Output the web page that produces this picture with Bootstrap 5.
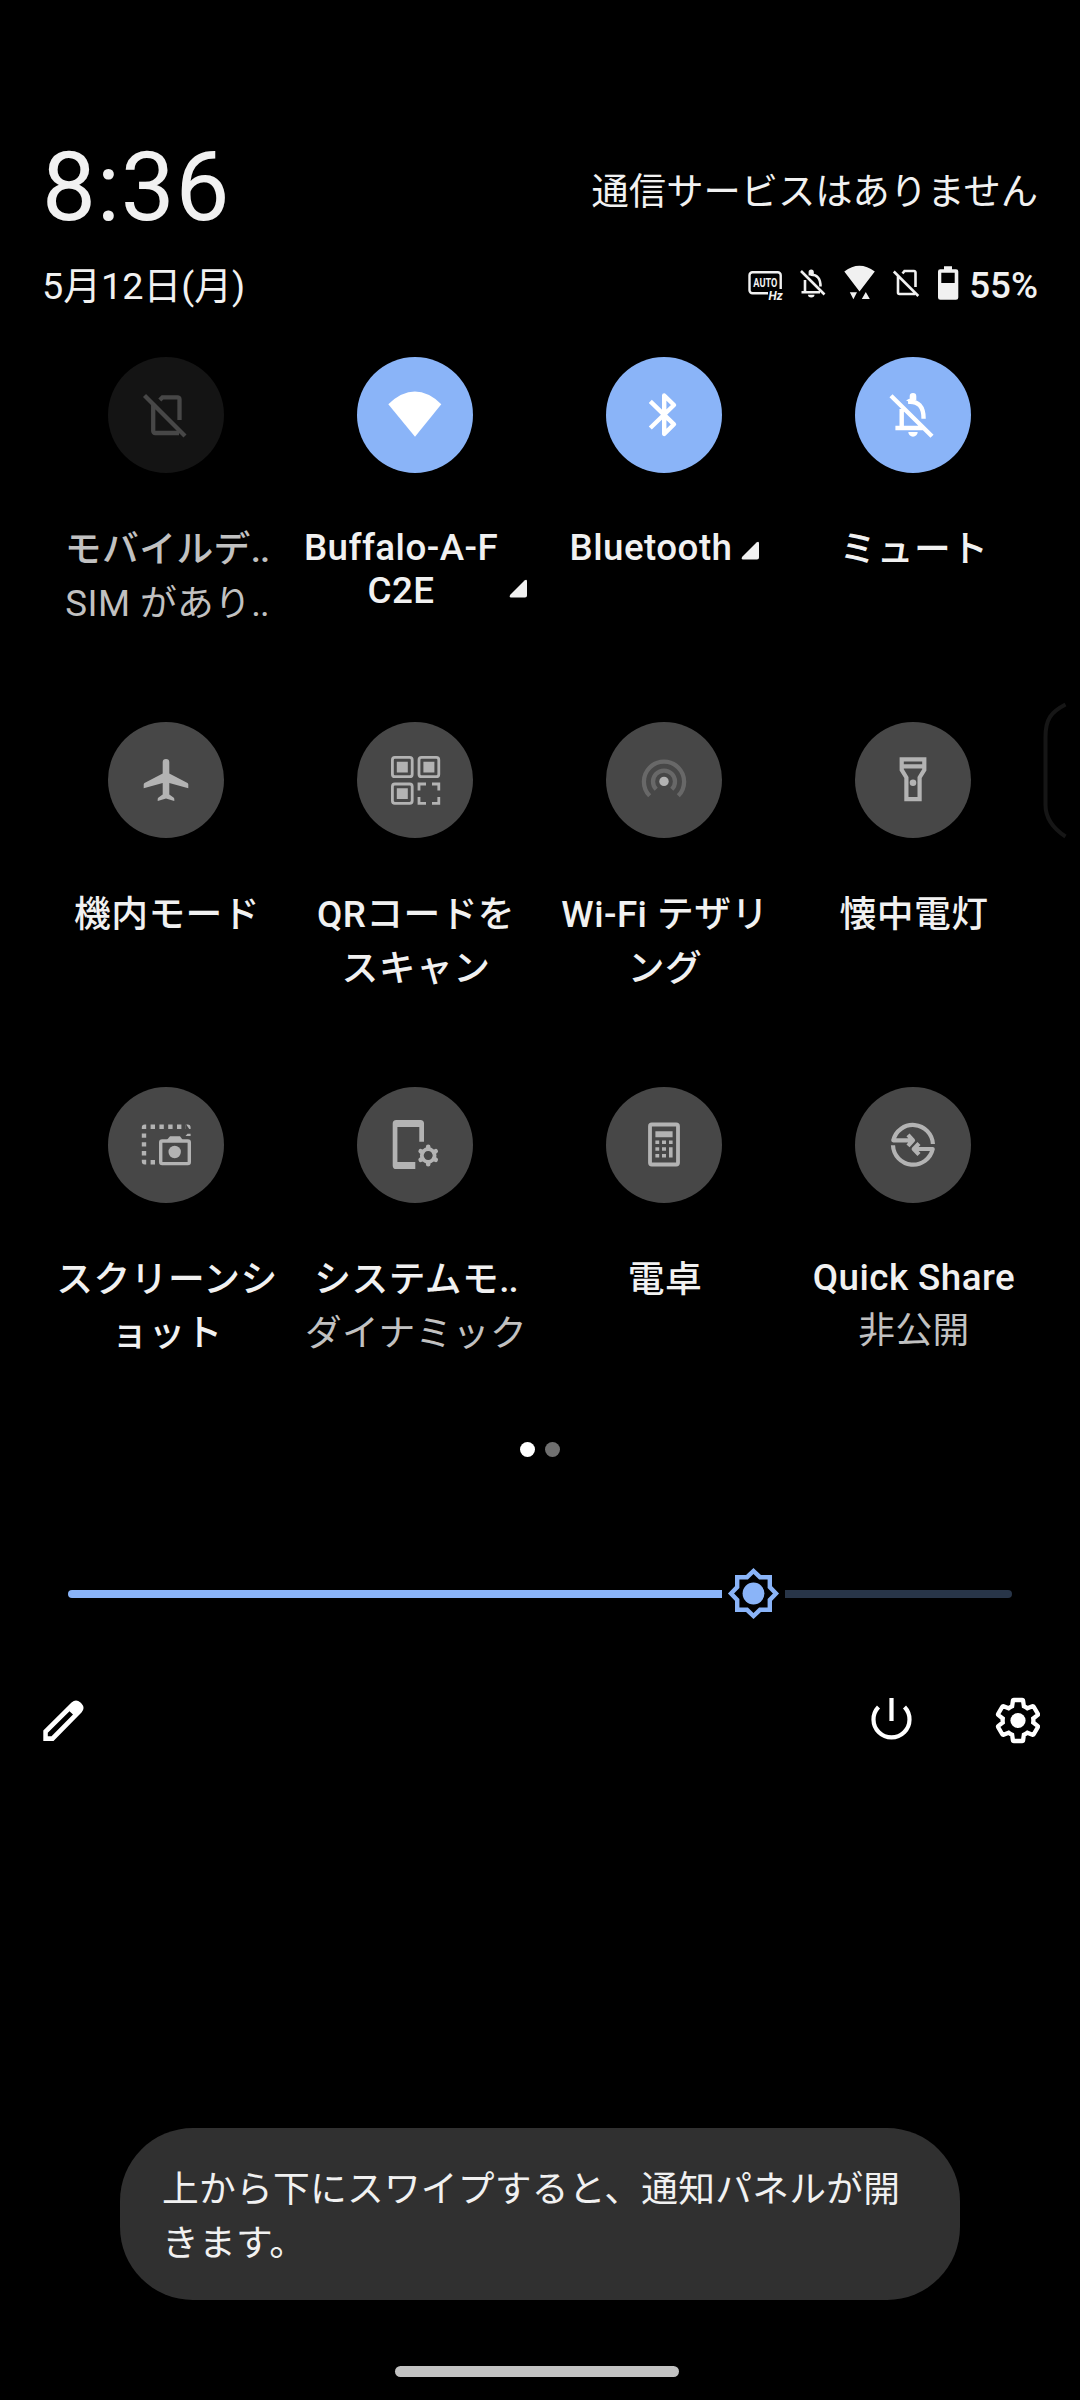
<!DOCTYPE html>
<html lang="ja">
<head>
<meta charset="utf-8">
<meta name="viewport" content="width=device-width, initial-scale=1">
<title>クイック設定</title>
<link rel="stylesheet" href="https://cdn.jsdelivr.net/npm/bootstrap@5.3.0/dist/css/bootstrap.min.css">
<style>
body{background:#000;color:#f1f1f1;font-family:Roboto,"Noto Sans CJK JP",sans-serif;font-size:36.75px;line-height:54px;overflow-x:hidden}
.screen{width:1080px;height:2400px;padding:130px 42px 23px;overflow:hidden}
svg{display:block;flex:none}
.clock-row{height:129px}
.clock{font-size:96px;line-height:114px;letter-spacing:.8px}
.carrier{margin-top:35px;font-size:37.300px}
.date{font-size:37.800px}
.status-icons{height:54px}
.battery-text{font-weight:500;margin-left:9px}
.tiles{width:996px;margin:44px 0 0 -1px;row-gap:44px}
.tile{width:249px;height:321px}
.disc{width:116px;height:116px;border-radius:50%;background:#474747;color:#b3b3b3}
.disc.on{background:#8ab4f8;color:#fff}
.disc.off{background:#141414;color:#474747}
.label-ja,.label-en{font-weight:500;text-align:center;white-space:nowrap;letter-spacing:.45px;padding-left:3px}
.label-ja{margin-top:50px}
.label-en{margin-top:53px;line-height:43px}
.sub{color:#c1c1c1;white-space:nowrap;letter-spacing:.4px;padding-left:3px}
.clip-dots{letter-spacing:-1px}
.label-en + .sub{margin-top:5px}
.unavailable .label-ja{color:#c1c1c1}
.dots{gap:10px;margin-top:34px}
.dot{width:15px;height:15px;border-radius:50%;background:#707070}
.dot.now{background:#fff}
.slider{margin:110px 26px 0;height:53px}
.track-on{height:8px;width:654px;background:#8ab4f8;border-radius:4px 0 0 4px}
.track-off{height:8px;width:227px;background:#283548;border-radius:0 4px 4px 0}
.actions{margin:76px -2px 0 0;height:48px}
.hint{width:840px;height:172px;border-radius:73px;background:#303030;padding:35px 40px 0 42px;letter-spacing:.23px;white-space:nowrap}
.home-bar{width:284px;height:11px;border-radius:6px;background:#c2c2c2;margin:66px 6px 0 0}
.edge{position:absolute;left:1040px;top:700px}
</style>
<script src="https://cdn.jsdelivr.net/npm/bootstrap@5.3.0/dist/js/bootstrap.bundle.min.js"></script>
</head>
<body>
<main class="screen d-flex flex-column position-relative">
  <header>
    <div class="clock-row d-flex justify-content-between align-items-start">
      <div class="clock">8:36</div>
      <div class="carrier">通信サービスはありません</div>
    </div>
    <div class="d-flex justify-content-between">
      <div class="date">5月12日(月)</div>
      <div class="status-icons d-flex">
        <svg width="290" height="54" viewBox="670 259 290 54" fill="none" stroke="#f1f1f1" stroke-width="2.4">
          <path d="M768 293.2H752.5a3 3 0 0 1-3-3V275.300a3 3 0 0 1 3-3h25.200a3 3 0 0 1 3 3V289"/>
          <text x="753.3" y="286.500" font-size="12.500" font-weight="700" textLength="24" lengthAdjust="spacingAndGlyphs" fill="#f1f1f1" stroke="none">AUTO</text>
          <text x="768.500" y="299.500" font-size="12" font-weight="700" font-style="italic" fill="#f1f1f1" stroke="none">Hz</text>
          <path stroke-width="2.600" d="M801 271l23.500 23.500M801.500 292.300h18.500M805 292V280M810.500 274.800q10-.500 10 11.700"/>
          <path fill="#f1f1f1" stroke="none" d="M808.600 275.500v-3.500a2.600 2.600 0 0 1 5.200 0v3.200zM808 294.800h6.500a3.200 2.600 0 0 1-6.500 0z"/>
          <path fill="#f1f1f1" stroke="none" d="M844.300 271.500q15-11.500 30.500 0L859.500 291.500zM849.800 292.300h7.200l-3.600 7zM861.800 299h8l-4-7z"/>
          <path stroke-width="2.600" d="M893.800 271.500l24.500 24.500M898 276v16.500a1.500 1.500 0 0 0 1.500 1.500H915M902.500 273.500l2-2.500H914a1.500 1.500 0 0 1 1.500 1.500V287"/>
          <path fill="#f1f1f1" fill-rule="evenodd" stroke="none" d="M944 266.300h8v3h4a2.300 2.300 0 0 1 2.300 2.300V297.500a2.300 2.300 0 0 1-2.300 2.300H940.300a2.300 2.300 0 0 1-2.300-2.300V271.600a2.300 2.300 0 0 1 2.300-2.300H944zM941.300 272.800V283H954.700V272.800z"/>
        </svg>
        <span class="battery-text">55%</span>
      </div>
    </div>
  </header>

  <section class="tiles d-flex flex-wrap">
    <div class="tile unavailable d-flex flex-column align-items-center">
      <div class="disc off">
        <svg width="116" height="116" fill="none" stroke="currentColor" stroke-width="4.300"><path d="M36.500 38.500L77 79M45.200 46V74a2 2 0 0 0 2 2H71M51.800 43l2.700-2.700H69.500a2 2 0 0 1 2 2V63"/></svg>
      </div>
      <div class="label-ja">モバイルデ<span class="clip-dots">..</span></div>
      <div class="sub">SIM があり<span class="clip-dots">..</span></div>
    </div>
    <div class="tile d-flex flex-column align-items-center">
      <div class="disc on">
        <svg width="116" height="116" fill="currentColor"><path d="M31.300 47.200Q58 22 84.300 47.200L58 79.700z"/></svg>
      </div>
      <div class="d-flex align-items-end">
        <div class="label-en">Buffalo-A-F<br>C2E</div>
        <svg class="ms-2" width="22" height="43" fill="#f1f1f1"><path d="M18.500 11.500q2.500-2 2.500.800V26.500a2 2 0 0 1-2 2H5q-2.500-.500-.500-3z"/></svg>
      </div>
    </div>
    <div class="tile d-flex flex-column align-items-center">
      <div class="disc on">
        <svg width="116" height="116" fill="none" stroke="currentColor" stroke-width="4.400"><path stroke-linejoin="round" d="M44.300 44.300L68 67.300L58.200 77V38.500L68 48L44.300 71"/></svg>
      </div>
      <div class="d-flex align-items-end">
        <div class="label-en">Bluetooth</div>
        <svg class="ms-2" width="20" height="43" fill="#f1f1f1"><path d="M16.500 16.500q2.500-2 2.500.800V31.500a2 2 0 0 1-2 2H3q-2.500-.500-.500-3z"/></svg>
      </div>
    </div>
    <div class="tile d-flex flex-column align-items-center">
      <div class="disc on">
        <svg width="116" height="116" fill="none" stroke="currentColor" stroke-width="4.400"><path d="M36 38.800L77 79.300M40.400 71H69M46.700 71V52M53 44.800q15.600-1.500 15.600 17"/><path fill="currentColor" stroke="none" d="M54.700 44.500V39.300a3.300 3.300 0 0 1 6.600 0V43zM53.300 75h9.400a4.700 4.700 0 0 1-9.400 0zM51 43.500l4-2 3 4.500z"/></svg>
      </div>
      <div class="label-ja">ミュート</div>
    </div>

    <div class="tile d-flex flex-column align-items-center">
      <div class="disc">
        <svg width="116" height="116" fill="currentColor"><path d="M54.700 40.300a3.300 3.300 0 0 1 6.600 0V51.500L79.500 61q.8.500.8 1.500V66.300L61.300 61V72.500L65.500 75.500q.8.600.8 1.500V79L58 76.500L49.700 79V77q0-.9.800-1.500L54.700 72.500V61L35.700 66.300V62.500q0-1 .8-1.500L54.700 51.500z"/></svg>
      </div>
      <div class="label-ja">機内モード</div>
    </div>
    <div class="tile d-flex flex-column align-items-center">
      <div class="disc">
        <svg width="116" height="116" fill="none" stroke="currentColor" stroke-width="2.800"><rect x="35.400" y="35.400" width="19.800" height="19.300" rx="2.500"/><rect x="62" y="35.400" width="19.800" height="19.300" rx="2.500"/><rect x="35.400" y="62" width="19.800" height="19.300" rx="2.500"/><path d="M62 68.500V62H69M75 62h6.800v6.500M81.800 75v6.300H75M69 81.300H62V75"/><path fill="currentColor" stroke="none" d="M39.800 39.800h11v10.700h-11zM66.400 39.800h11v10.700h-11zM39.800 66.300h11V77h-11z"/></svg>
      </div>
      <div class="label-ja">QRコードを<br>スキャン</div>
    </div>
    <div class="tile d-flex flex-column align-items-center">
      <div class="disc">
        <svg width="116" height="116" fill="none" stroke="#686868" stroke-width="4.300"><path d="M43.700 73.800A20.100 20.100 0 1 1 72.300 73.800M50.200 67.300A11 11 0 1 1 65.800 67.300"/><circle cx="58" cy="59.400" r="4.700" fill="#b3b3b3" stroke="none"/></svg>
      </div>
      <div class="label-ja">Wi-Fi テザリ<br>ング</div>
    </div>
    <div class="tile d-flex flex-column align-items-center">
      <div class="disc">
        <svg width="116" height="116" fill="none" stroke="currentColor" stroke-width="4.200"><path d="M46.700 37.400H69.300V47.800L64.600 55.500V77.200H51.400V55.500L46.700 47.800ZM46.700 44.400H69.300"/><circle cx="58" cy="60.700" r="3.300" fill="currentColor" stroke="none"/></svg>
      </div>
      <div class="label-ja">懐中電灯</div>
    </div>

    <div class="tile d-flex flex-column align-items-center">
      <div class="disc">
        <svg width="116" height="116" fill="none" stroke="currentColor"><path stroke-width="4.400" stroke-dasharray="4.400" d="M42.600 39.800H78M36 46.400V72.900M42.600 75.300H47"/><path fill="currentColor" stroke="none" d="M33.800 42V40.500a3 3 0 0 1 3-3H38.200V42zM78.200 37.600h1.400a3 3 0 0 1 3 3V42h-1.400zM77.500 49l2-2.200h3.100V49zM33.800 73.100h4.400v4.400h-1.400a3 3 0 0 1-3-3z"/><rect x="52.700" y="54" width="28.600" height="22.600" rx="1.500" stroke-width="3.400"/><path fill="currentColor" stroke="none" d="M58 54l4-4.700H72L75.500 54z"/><circle cx="66.700" cy="65" r="6.200" fill="currentColor" stroke="none"/></svg>
      </div>
      <div class="label-ja">スクリーンシ<br>ョット</div>
    </div>
    <div class="tile d-flex flex-column align-items-center">
      <div class="disc">
        <svg width="116" height="116" fill="currentColor"><path d="M58.300 82H39.300a3.600 3.600 0 0 1-3.600-3.600V36.600A3.600 3.600 0 0 1 39.300 33H63.400A3.600 3.600 0 0 1 67 36.600V54.700H62.300V40H40.400V75H58.300z"/><circle cx="71.200" cy="68.500" r="6.400" fill="none" stroke="currentColor" stroke-width="3.800"/><path stroke="currentColor" stroke-width="4.600" stroke-linecap="round" d="M71.200 59.800v2M71.200 75.200v2M63.700 64.200l1.700 1M77 71.800l1.700 1M78.700 64.200l-1.700 1M65.400 71.800l-1.700 1"/></svg>
      </div>
      <div class="label-ja">システムモ<span class="clip-dots">..</span></div>
      <div class="sub">ダイナミック</div>
    </div>
    <div class="tile d-flex flex-column align-items-center">
      <div class="disc">
        <svg width="116" height="116" fill="currentColor"><rect x="44" y="37.500" width="28" height="40" rx="1.800" fill="none" stroke="currentColor" stroke-width="3.800"/><path d="M49.400 44.300H66.600v6H49.400zM49.400 53.500h3.800v3.500h-3.800zM56 53.500h4v3.500h-4zM63 53.500h3.600v3.500H63zM49.400 60.200h3.800v3.600h-3.800zM56 60.200h4v3.600h-4zM63 60.200h3.600v10.300H63zM49.400 67h3.800v3.500h-3.800zM56 67h4v3.500h-4z"/></svg>
      </div>
      <div class="label-ja">電卓</div>
    </div>
    <div class="tile d-flex flex-column align-items-center">
      <div class="disc">
        <svg width="116" height="116" fill="none" stroke="currentColor" stroke-width="4.200" stroke-linejoin="round"><path d="M57.500 53.300H38.300A20.100 20.100 0 0 1 77.900 57M53 47.800L58 53.300L53 58.800M58.500 62H77.700A20.100 20.100 0 0 1 38 58.300M64 56.500L58.700 62L64 67.500"/></svg>
      </div>
      <div class="label-en">Quick Share</div>
      <div class="sub">非公開</div>
    </div>
  </section>

  <div class="dots d-flex justify-content-center"><span class="dot now"></span><span class="dot"></span></div>

  <div class="slider d-flex align-items-center justify-content-between">
    <div class="track-on"></div>
    <svg width="53" height="53" viewBox="-26.500 -26.500 53 53" fill="none" stroke="#8ab4f8" stroke-width="4.400"><path d="M0-22.500L6.500-16.300H16.300V-6.500L22.500 0L16.300 6.500V16.300H6.500L0 22.500L-6.500 16.300H-16.300V6.500L-22.500 0L-16.300-6.500V-16.300H-6.500Z"/><circle r="10.900" fill="#8ab4f8" stroke="none"/></svg>
    <div class="track-off"></div>
  </div>

  <div class="actions d-flex justify-content-between">
    <svg width="46" height="48" viewBox="42 1696 46 48" fill="#fff"><path fill-rule="evenodd" d="M43.300 1741V1730.500L71.500 1702.500Q76 1698.500 80.500 1702.500L81.700 1703.800Q85.500 1708 81.500 1712.500L53.500 1741ZM47.800 1736.300H51.500L73 1714.500L69.500 1711.200L47.800 1732.800Z"/></svg>
    <svg width="170" height="48" viewBox="870 1696 170 48" fill="none" stroke="#fff" stroke-width="4.200"><path d="M891.500 1698V1721M878.500 1707A18 18 0 1 0 904.500 1707"/><g transform="translate(993.400 1695.900) scale(2.050)" stroke-width="2.100"><path d="M19.430 12.980c.04-.32.07-.64.07-.98s-.03-.66-.07-.98l2.110-1.650c.19-.15.24-.42.12-.64l-2-3.460c-.09-.16-.26-.25-.44-.25-.06 0-.12.01-.17.03l-2.490 1c-.52-.4-1.080-.73-1.690-.98l-.38-2.650C14.460 2.180 14.250 2 14 2h-4c-.25 0-.46.18-.49.42l-.38 2.650c-.61.25-1.170.59-1.690.98l-2.490-1c-.06-.02-.12-.03-.18-.03-.17 0-.34.09-.43.25l-2 3.460c-.13.22-.07.49.12.64l2.110 1.650c-.04.32-.07.65-.07.98s.03.66.07.98l-2.110 1.650c-.19.15-.24.42-.12.64l2 3.460c.09.16.26.25.44.25.06 0 .12-.01.17-.03l2.490-1c.52.4 1.080.73 1.690.98l.38 2.650c.03.24.24.42.49.42h4c.25 0 .46-.18.49-.42l.38-2.650c.61-.25 1.170-.59 1.690-.98l2.490 1c.06.02.12.03.18.03.17 0 .34-.09.43-.25l2-3.460c.12-.22.07-.49-.12-.64z"/><circle cx="12" cy="12" r="3.700" fill="#fff" stroke="none"/></g></svg>
  </div>

  <div class="hint mt-auto align-self-center">上から下にスワイプすると、通知パネルが開<br>きます。</div>
  <div class="home-bar align-self-center"></div>
  <svg class="edge" width="30" height="142" fill="none" stroke="#161616" stroke-width="4"><path d="M25.500 4.500C11 12 5.500 19 5.500 37V105C5.500 119 14 129 25.500 136.500"/></svg>
</main>
</body>
</html>
